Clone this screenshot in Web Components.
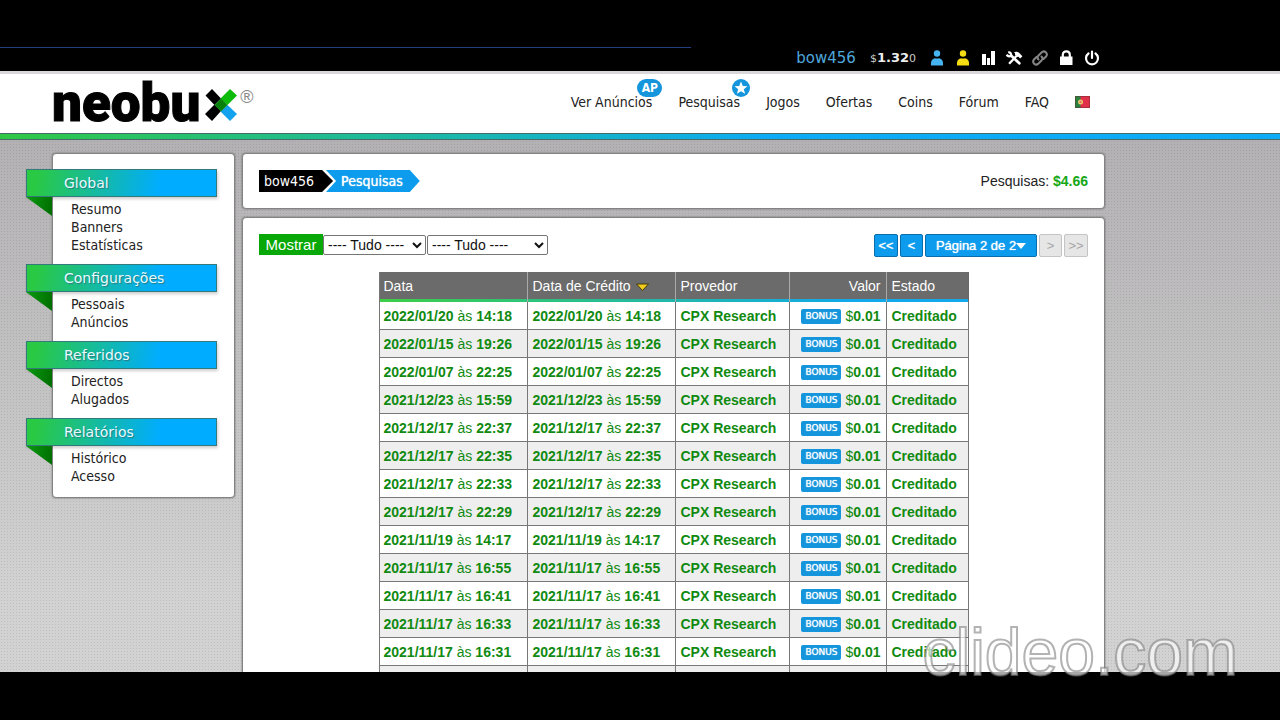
<!DOCTYPE html>
<html lang="pt">
<head>
<meta charset="utf-8">
<title>NeoBux - Pesquisas</title>
<style>
html, body { margin: 0; height: 100%; background: #000; }
body { font: 14px/18px "Liberation Sans", Arial, sans-serif; color: #222; }
</style>
</head>
<body>
<nb-app></nb-app>
<script>
const define = (name, html, setup) => {
  const template = document.createElement('template');
  template.innerHTML = html;
  customElements.define(name, class extends HTMLElement {
    connectedCallback() {
      if (this.shadowRoot) return;
      this.attachShadow({ mode: 'open' }).append(template.content.cloneNode(true));
      if (setup) setup(this, this.shadowRoot);
    }
  });
};

define('nb-topbar', `
<style>
:host { display: flex; flex-direction: column; background: #000; height: 71px; box-sizing: border-box; padding-top: 47px; }
.line { height: 1px; width: 54%; background: #233f80; }
.bar { display: flex; justify-content: flex-end; align-items: center; gap: 10px; height: 20px; padding-right: 180px; font-family: "DejaVu Sans", Verdana, sans-serif; }
a { display: flex; color: #fff; text-decoration: none; }
.user { color: #4fa8dc; font-size: 15px; margin-right: 4px; }
.money { color: #eee; font-size: 13px; font-weight: bold; margin-right: 2px; align-items: baseline; }
small { font-size: 11px; font-weight: normal; color: #ccc; }
svg { width: 16px; height: 16px; display: block; }
</style>
<div class="line"></div>
<div class="bar">
<a class="user" href="#">bow456</a>
<a class="money" href="#"><small>$</small>1.32<small>0</small></a>
<a href="#" aria-label="Conta"><svg viewBox="0 0 16 16" fill="#46b4f0"><circle cx="9" cy="3.500" r="3.200"/><path d="M3 15.500v-2.500c0-3 2-4.500 4-4.800q2 .8 4 0c2 .3 4 1.800 4 4.800v2.500z"/></svg></a>
<a href="#" aria-label="Referidos"><svg viewBox="0 0 16 16" fill="#f6dc12"><circle cx="9" cy="3.500" r="3.200"/><path d="M3 15.500v-2.500c0-3 2-4.500 4-4.800q2 .8 4 0c2 .3 4 1.800 4 4.800v2.500z"/></svg></a>
<a href="#" aria-label="Estatísticas"><svg viewBox="0 0 16 16" fill="#fff"><path d="M2 4h4v11H2zM7 8h3v7H7zM11 1h4v14h-4z"/></svg></a>
<a href="#" aria-label="Ferramentas"><svg viewBox="0 0 18 16" style="overflow:visible"><g fill="none" stroke="#fff"><path stroke-width="3" stroke-linecap="round" d="M6 5.500L15 14"/><path stroke-width="2.600" d="M12 5.500L3.500 14.500"/><path stroke-width="2.600" d="M2.500 1.500Q6.500 2 5.500 5 4 7.500.5 4.500"/></g><path fill="#fff" d="M8.500 1.500c4-1.500 6.500 0 8 2.500l2 2-2.500 2.500-2-2-1 .5-3-3c.5-1.500 0-2-1.500-2.500z"/></svg></a>
<a href="#" aria-label="Ligação"><svg viewBox="0 0 16 16" fill="none" stroke="#858585" stroke-width="2" stroke-linecap="round"><path d="M6.500 9.500c-1.500-1.500-1-3 0-4L9.500 2.500c3-3 7 1 4.500 4L11.500 9M9.500 6.500c1.500 1.500 1 3 0 4L6.500 13.500c-3 3-7-1-4.500-4L4.500 7"/></svg></a>
<a href="#" aria-label="Segurança"><svg viewBox="0 0 16 16"><path fill="#fff" d="M2 6.500h12.500V15H2z"/><path fill="none" stroke="#fff" stroke-width="2.200" d="M4.800 8V4.800c0-4.700 7-4.700 7 0V8"/></svg></a>
<a href="#" aria-label="Sair"><svg viewBox="0 0 16 16" fill="none" stroke="#fff" stroke-width="2.200" stroke-linecap="round"><path d="M8 1.500V8M4.500 3.500a6 6 0 1 0 7 0"/></svg></a>
</div>`);

define('nb-logo', `
<style>
:host { display: flex; align-items: flex-start; color: #000; }
b { font: 900 53px/60px Roboto, sans-serif; -webkit-text-stroke: 1px #000; }
svg { width: 34px; height: 32px; margin: 16px 0 0 4px; }
span { font: 18px/18px "Liberation Sans", Arial, sans-serif; color: #888; margin: 15px 0 0 2px; }
</style>
<b>neobu</b>
<svg viewBox="0 0 34 32"><path d="M8 0L17 9.500 10.500 16 1.500 6.500zM10.500 15.500l6.500 6.500L8 32 1 25z" fill="#000"/><path d="M26 0l7 6.500-9.500 9.500-7-6.500z" fill="#0dbb0b"/><path d="M23.500 16l9.500 9-7 7-9.500-9.500z" fill="#13a2ee"/><path d="M17 9.500l6.500 6.500-6.500 6.500-6.500-6.500z" fill="#068009"/></svg>
<span>®</span>`);

define('nb-header', `
<style>
:host { display: block; background: #fff; border-top: 3px solid #d9d7d9; }
.row { display: flex; height: 59px; align-items: flex-start; justify-content: space-between; padding: 0 190px 0 52px; }
nb-logo { margin-top: -1px; }
nav { display: flex; gap: 26px; margin-top: 19px; font: 14px/18px "DejaVu Sans Condensed", "DejaVu Sans", Tahoma, sans-serif; }
a { color: #222; text-decoration: none; position: relative; white-space: nowrap; }
.badge { position: absolute; top: -14px; right: -10px; height: 18px; box-sizing: border-box; border-radius: 9px; background: #1595dc; color: #fff; font: bold 12px/18px "DejaVu Sans Condensed", "DejaVu Sans", sans-serif; width: 25px; text-align: center; }
.star { width: 18px; }
.star svg { display: block; width: 18px; height: 18px; }
.flag svg { display: block; width: 15px; height: 12px; margin: 3px 0 0; }
.stripe { height: 5px; border: 1px solid #476b68; border-width: 1px 0; background: linear-gradient(90deg, #2fc845, #0bacf5 60%); }
</style>
<div class="row">
<nb-logo></nb-logo>
<nav>
<a href="#">Ver Anúncios<span class="badge">AP</span></a>
<a href="#">Pesquisas<span class="badge star"><svg viewBox="0 0 18 18"><path fill="#fff" d="M9 2.500l1.800 4.500 4.700.2-3.700 3 1.300 4.600L9 12.200l-4.100 2.600 1.300-4.600-3.700-3 4.700-.2z"/></svg></span></a>
<a href="#">Jogos</a>
<a href="#">Ofertas</a>
<a href="#">Coins</a>
<a href="#">Fórum</a>
<a href="#">FAQ</a>
<a class="flag" href="#" aria-label="Português"><svg viewBox="0 0 15 12"><path fill="#e0304a" d="M0 0h15v12H0z"/><path fill="#28803f" d="M0 0h5.500v12H0z"/><circle cx="5.500" cy="6" r="2.500" fill="#e8c96b"/><circle cx="5.500" cy="6" r="1.100" fill="#e86464"/><path fill="none" stroke="#702c32" stroke-opacity=".5" d="M.5.500h14v11H.500z"/></svg></a>
</nav>
</div>
<div class="stripe"></div>`);

define('nb-menu-group', `
<style>
:host { display: block; padding-bottom: 10px; }
h2 { position: relative; margin: 0 17px 3px -27px; height: 28px; box-sizing: border-box; padding-left: 37px; border: 1px solid #34797c; background: linear-gradient(100deg, #2ac943 5%, #00acff 70%); color: #e8fbff; font: 14px/26px "DejaVu Sans", Verdana, sans-serif; text-shadow: 1px 1px 1px #287c84; box-shadow: 1px 2px 3px #0003; }
h2::after { content: ""; position: absolute; left: -1px; top: 27px; width: 26px; height: 19px; background: linear-gradient(100deg, #0a9a12, #006d00); clip-path: polygon(0 0, 100% 0, 100% 100%); }
div { display: flex; flex-direction: column; align-items: flex-start; padding-left: 18px; font: 14px/18px "DejaVu Sans Condensed", "DejaVu Sans", Tahoma, sans-serif; }
::slotted(a) { color: #222; text-decoration: none; }
</style>
<h2></h2><div><slot></slot></div>`, (el, root) => { root.querySelector('h2').textContent = el.getAttribute('label'); });

define('nb-panel', `
<style>
:host { display: block; box-sizing: border-box; background: #fff; border: 1px solid #838383; border-radius: 4px; box-shadow: 0 0 2px #666; padding: 16px; }
</style>
<slot></slot>`);

define('nb-crumbs', `
<style>
:host { display: flex; font: 14px/22px "DejaVu Sans Condensed", "DejaVu Sans", Tahoma, sans-serif; }
a { color: #fff; text-decoration: none; height: 22px; }
.home { background: #000; padding: 0 19px 0 5px; clip-path: polygon(0 0, calc(100% - 11px) 0, 100% 50%, calc(100% - 11px) 100%, 0 100%); }
.here { background: #0c9bed; margin-left: -7px; padding: 0 17px 0 15px; text-shadow: 0 0 1px #fff; clip-path: polygon(0 0, calc(100% - 10px) 0, 100% 50%, calc(100% - 10px) 100%, 0 100%, 10px 50%); }
</style>
<a class="home" href="#">bow456</a><a class="here" href="#">Pesquisas</a>`);

define('nb-filter', `
<style>
:host { display: flex; align-items: flex-end; }
button { height: 21px; width: 64px; padding: 0; border: 0; background: #08a808; color: #fff; font: 15px/21px "Liberation Sans", Arial, sans-serif; }
select { height: 20px; box-sizing: border-box; border: 1px solid #767676; border-radius: 2px; padding: 0; background: #fff; color: #111; font: 14px "Liberation Sans", Arial, sans-serif; width: 103px; }
select + select { width: 121px; margin-left: 1px; }
</style>
<button type="button">Mostrar</button>
<select aria-label="Estado"><option>---- Tudo ----</option></select>
<select aria-label="Provedor"><option>---- Tudo ----</option></select>`);

define('nb-pager', `
<style>
:host { display: flex; gap: 2px; }
button { height: 23px; width: 23px; box-sizing: border-box; padding: 0; border: 1px solid #0b6eaa; border-radius: 2px; background: #0c9bed; color: #fff; font: 13px/20px "Liberation Sans", Arial, sans-serif; text-shadow: 0 0 1px #fff; }
button.wide { width: 24px; }
button.page { display: flex; align-items: center; justify-content: center; width: 112px; }
button:disabled { background: #e6e6e6; border-color: #c4c4c4; color: #a5a5a5; text-shadow: none; }
svg { width: 10px; height: 6px; }
</style>
<button type="button" class="wide">&lt;&lt;</button>
<button type="button">&lt;</button>
<button type="button" class="page">Página 2 de 2<svg viewBox="0 0 10 6"><path fill="#fff" d="M0 0h10L5 6z"/></svg></button>
<button type="button" disabled>&gt;</button>
<button type="button" class="wide" disabled>&gt;&gt;</button>`);

define('nb-history', `
<style>
:host { display: block; }
table { width: 590px; max-width: 100%; margin: 0 auto; table-layout: fixed; border-spacing: 0; border-left: 1px solid #777; box-sizing: border-box; color: #118a11; }
th, td { box-sizing: border-box; padding: 0 5px; text-align: left; white-space: nowrap; border-right: 1px solid #777; }
th:last-child { border-right-color: #686868; }
.when { width: 148px; } .who { width: 114px; } .val { width: 97px; } 
thead tr { background: linear-gradient(90deg, #3ccf45, #12a8ea 80%) bottom / 100% 3px no-repeat, #6b6b6b; }
th { height: 30px; padding: 0 5px 2px 4px; color: #fff; font-weight: normal; border-color: #aaa; }
th + th { padding-left: 5px; }
td { height: 28px; border-bottom: 1px solid #777; font-weight: bold; }
td:first-child { padding-left: 4px; }
tbody tr:nth-child(even) { background: #eee; }
i { font-style: normal; font-weight: normal; }
.val { text-align: right; }
.tag { display: inline-block; width: 40px; margin-right: 4px; border-radius: 2px; background: #1595dc; color: #fff; font: 9px/15px "DejaVu Sans", Verdana, sans-serif; text-shadow: 0 0 1px #fff; text-align: center; vertical-align: middle; }
.usd { font-weight: normal; }
svg { width: 13px; height: 8px; margin-left: 5px; }
</style>
<table>
<thead><tr><th class="when">Data</th><th class="when">Data de Crédito<svg viewBox="0 0 13 8"><path fill="#f2cd1c" stroke="#42390f" d="M.5 1h12L6.500 7.500z"/></svg></th><th class="who">Provedor</th><th class="val">Valor</th><th>Estado</th></tr></thead>
<tbody></tbody>
</table>`, (el, root) => {
  const dates = ['2022/01/20 14:18', '2022/01/15 19:26', '2022/01/07 22:25', '2021/12/23 15:59', '2021/12/17 22:37', '2021/12/17 22:35', '2021/12/17 22:33', '2021/12/17 22:29', '2021/11/19 14:17', '2021/11/17 16:55', '2021/11/17 16:41', '2021/11/17 16:33', '2021/11/17 16:31'];
  const rows = dates.map(entry => {
    const when = entry.replace(' ', ' <i>às</i> ');
    return `<tr><td>${when}</td><td>${when}</td><td>CPX Research</td><td class="val"><span class="tag">BONUS</span><span class="usd">$</span>0.01</td><td>Creditado</td></tr>`;
  });
  rows.push('<tr><td></td><td></td><td></td><td></td><td></td></tr>');
  root.querySelector('tbody').innerHTML = rows.join('');
});

define('nb-watermark', `
<style>
:host { position: absolute; right: 42px; bottom: 28px; font: 66px/80px "Liberation Sans", Arial, sans-serif; color: #ffffffa8; -webkit-text-stroke: 2px #80808099; pointer-events: none; }
</style>clideo.com`);

define('nb-app', `
<style>
:host { display: grid; grid-template-rows: auto auto minmax(0, 1fr) 48px; height: 100vh; position: relative; overflow: hidden; }
.stage { overflow: hidden; display: grid; grid-template-columns: 183px minmax(0, 1fr); align-items: start; gap: 7px; padding: 13px 175px 0 52px;
  background: radial-gradient(circle, #00000018 0 1px, transparent 1px) 0 0 / 3px 3px, linear-gradient(#b3b1b3, #d2d2d2 85%); }
.content { display: grid; gap: 8px; }
.side { padding: 15px 0 2px; }
.row { display: flex; justify-content: space-between; align-items: center; }
.total { font-size: 14px; line-height: 22px; }
.total b { color: #16a716; }
.tools { margin-bottom: 15px; align-items: flex-start; }
.foot { background: #000; }
</style>
<nb-topbar></nb-topbar>
<nb-header></nb-header>
<main class="stage">
<nb-panel class="side">
<nb-menu-group label="Global"><a href="#">Resumo</a><a href="#">Banners</a><a href="#">Estatísticas</a></nb-menu-group>
<nb-menu-group label="Configurações"><a href="#">Pessoais</a><a href="#">Anúncios</a></nb-menu-group>
<nb-menu-group label="Referidos"><a href="#">Directos</a><a href="#">Alugados</a></nb-menu-group>
<nb-menu-group label="Relatórios"><a href="#">Histórico</a><a href="#">Acesso</a></nb-menu-group>
</nb-panel>
<div class="content">
<nb-panel><div class="row"><nb-crumbs></nb-crumbs><span class="total">Pesquisas: <b>$4.66</b></span></div></nb-panel>
<nb-panel><div class="row tools"><nb-filter></nb-filter><nb-pager></nb-pager></div><nb-history></nb-history></nb-panel>
</div>
</main>
<div class="foot"></div>
<nb-watermark></nb-watermark>`);
</script>
</body>
</html>
